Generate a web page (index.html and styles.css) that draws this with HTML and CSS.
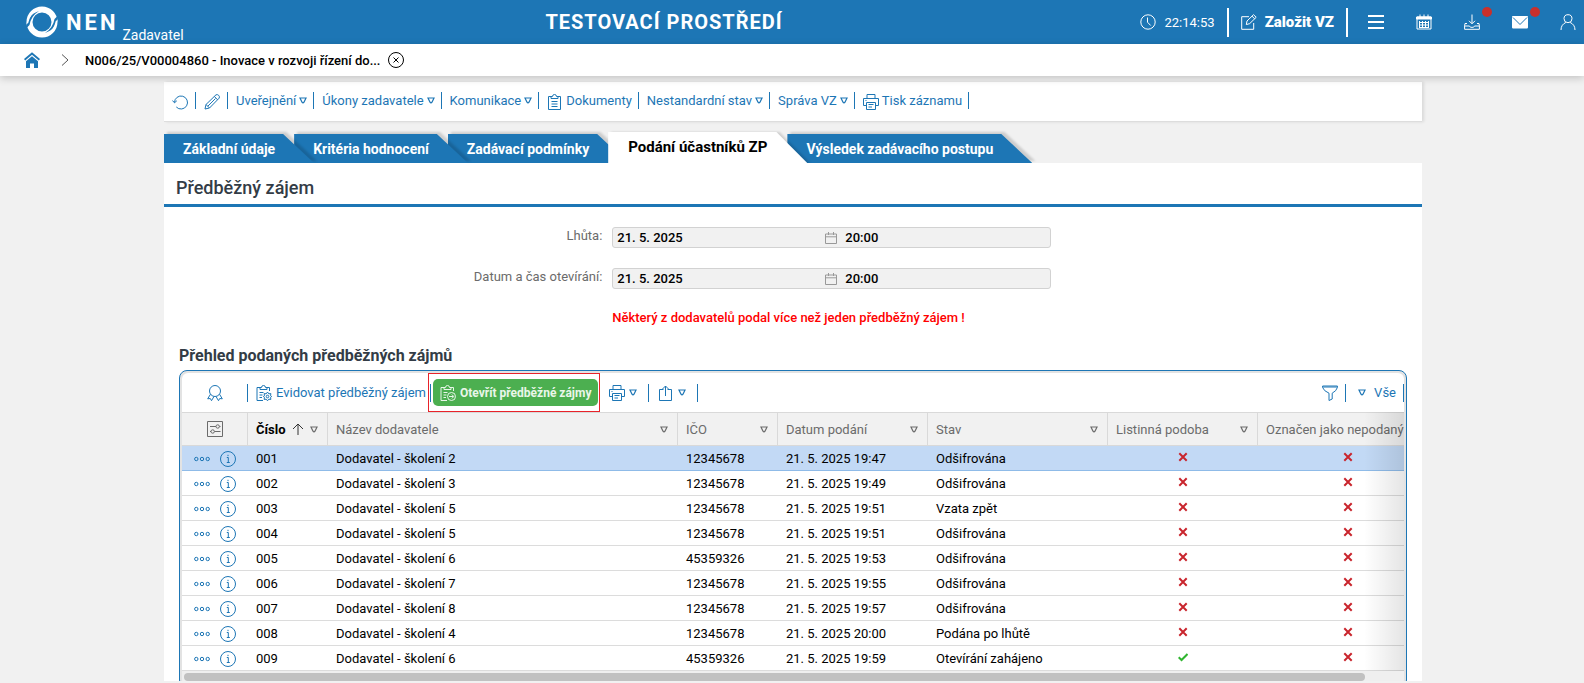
FILE: index.html
```html
<!DOCTYPE html>
<html lang="cs">
<head>
    <meta charset="UTF-8">
    <meta name="viewport" content="width=device-width, initial-scale=1.0">
    <title>NEN - Předběžný zájem</title>
    <link rel="stylesheet" href="styles.css">
</head>
<body>
    <!-- icon sprite -->
    <svg class="sprite" xmlns="http://www.w3.org/2000/svg">
        <symbol id="i-print" viewBox="0 0 16 16"><path d="M4 4.500V.5h8v4M3.500 11.500H.5v-7h15v7h-3M3.500 8.500h9v7h-9zM5.500 10.500h5M5.500 13h3.500M2.500 6.500h1"/></symbol>
        <symbol id="i-info" viewBox="0 0 16 16"><circle cx="8" cy="8" r="7.500"/><path d="M6.800 6.500h1.500v5M6.800 11.500h3M8 3.800v1.300"/></symbol>
        <symbol id="i-dots" viewBox="0 0 16 6"><circle cx="2.300" cy="3" r="1.700"/><circle cx="8" cy="3" r="1.700"/><circle cx="13.700" cy="3" r="1.700"/></symbol>
        <symbol id="i-down" viewBox="0 0 8 7"><path d="M1 1h6L5 5.200Q4 6.600 3 5.200z"/></symbol>
        <symbol id="i-no" viewBox="0 0 10 10"><path d="M1.300 1.300l7.400 7.400M8.700 1.300L1.300 8.700"/></symbol>
        <symbol id="i-yes" viewBox="0 0 10 10"><path d="M.7 5.300L3.500 8l6-6"/></symbol>
        <symbol id="i-cal" viewBox="0 0 12 12"><path d="M.5 2h11v9.500H.5zM.5 4.800h11M3.500 0v3M8.500 0v3"/></symbol>
        <symbol id="i-clip" viewBox="0 0 16 16"><path d="M4 2.500H1.500v13h12v-13H11M4 4.500v-2h1.500a2 2 0 0 1 4 0H11v2zM4.500 7.500h6M4.500 10h6M4.500 12.500h6"/></symbol>
    </svg>

    <header class="topbar">
        <a class="logo" href="#">
            <svg class="logo-ring" viewBox="0 0 32 32">
                <circle cx="16" cy="16" r="12.500" fill="none" stroke="#fff" stroke-width="6"/>
                <path d="M31.500 10Q31 23 19 27Q27 22 28.500 13zM.5 22Q1 9 13 5Q5 10 3.500 19z" fill="#1d76b5"/>
                <path d="M31.600 14Q30.500 24 21 30Q28 23 29.800 15zM.4 18Q1.500 8 11 2Q4 9 2.200 17z" fill="#fff"/>
            </svg>
            <span class="logo-name">NEN</span>
            <span class="logo-role">Zadavatel</span>
        </a>
        <div class="env">TESTOVACÍ PROSTŘEDÍ</div>
        <div class="clock">
            <svg class="ico" viewBox="0 0 16 16"><circle cx="8" cy="8" r="7.200"/><path d="M7.500 3.500v4.700l3.200 3.300"/></svg>
            <span>22:14:53</span>
        </div>
        <button class="create">
            <svg class="ico" viewBox="0 0 16 16"><path d="M8 2.700H.7v12.600h12V9M6 7l6.500-6.300 2.700 2.600L8.700 9.600 5.300 10.600zM11 2.200l2.700 2.600"/></svg>
            <span>Založit VZ</span>
        </button>
        <nav class="top-icons">
            <button aria-label="Menu"><svg class="ico thick" viewBox="0 0 16 16"><path d="M0 2h16M0 8h16M0 14h16"/></svg></button>
            <button aria-label="Kalendář"><svg class="ico" viewBox="0 0 16 16"><path d="M1 3h14v12H1z"/><path d="M.5 3h15v2H.5z" fill="#fff"/><path d="M4 .5V3M8 .5V3M12 .5V3M3 8.500h10M3 11h10M3 13.500h10M3.500 7v7M6.500 7v7M9.500 7v7M12.500 7v7"/></svg></button>
            <button aria-label="Stažení"><svg class="ico" viewBox="0 0 16 16"><path d="M8 .5v9M5 6.800l3 3 3-3M3 9.500H1l-.4 2.300v3.500h14.800v-3.500L15 9.500h-2M.6 12h4.900l1 1.300h3l1-1.300h4.900"/></svg><i class="badge"></i></button>
            <button aria-label="Zprávy"><svg class="ico" viewBox="0 0 16 16"><rect x="0" y="2.500" width="16" height="11.500" rx="1" fill="#fff"/><path d="M1 3.500l7 7 7-7" stroke="#1d76b5"/></svg><i class="badge"></i></button>
            <button aria-label="Uživatel"><svg class="ico" viewBox="0 0 16 16"><circle cx="8" cy="4.700" r="4"/><path d="M1 16c0-4 2-6.200 4.800-7.500M15 16c0-4-2-6.200-4.800-7.500"/></svg></button>
        </nav>
    </header>

    <nav class="crumbs">
        <a href="#" class="home" aria-label="Domů"><svg viewBox="0 0 16 16"><path d="M8 .2L16 7l-1.200 1.400L8 2.700 1.200 8.400 0 7z"/><path d="M8 4.300l6 5V16h-4v-4.500H6V16H2V9.300z"/></svg></a>
        <svg class="chevron" viewBox="0 0 8 12"><path d="M1 .5L7 6l-6 5.500"/></svg>
        <a href="#" class="crumb">N006/25/V00004860 - Inovace v rozvoji řízení do...</a>
        <button class="crumb-close" aria-label="Zavřít"><svg class="ico" viewBox="0 0 16 16"><circle cx="8" cy="8" r="7.500"/><path d="M5.500 5.500l5 5M10.500 5.500l-5 5"/></svg></button>
    </nav>

    <main>
        <div class="actions">
            <button class="icon-only" aria-label="Obnovit"><svg class="ico" viewBox="0 0 16 16"><path d="M2.500 8.500a6.500 6.500 0 1 1 1.800 4.500M.4 6.500l2.100 2.300 2.300-2"/></svg></button>
            <button class="icon-only" aria-label="Upravit"><svg class="ico" viewBox="0 0 16 16"><path d="M1 15l1-4.500L12 .8q1.500-.6 2.700.6t.5 2.700L5.500 14zM2 10.500L5.500 14M10.300 2.400l3.400 3.500M3.800 12.200l7.700-7.700"/></svg></button>
            <button>Uveřejnění <svg class="down"><use href="#i-down"/></svg></button>
            <button>Úkony zadavatele <svg class="down"><use href="#i-down"/></svg></button>
            <button>Komunikace <svg class="down"><use href="#i-down"/></svg></button>
            <button><svg class="ico"><use href="#i-clip"/></svg>Dokumenty</button>
            <button>Nestandardní stav <svg class="down"><use href="#i-down"/></svg></button>
            <button>Správa VZ <svg class="down"><use href="#i-down"/></svg></button>
            <button><svg class="ico"><use href="#i-print"/></svg>Tisk záznamu</button>
        </div>

        <nav class="tabs">
            <a href="#" class="tab"><i class="tab-bg"></i><span>Základní údaje</span></a>
            <a href="#" class="tab"><i class="tab-bg"></i><span>Kritéria hodnocení</span></a>
            <a href="#" class="tab"><i class="tab-bg"></i><span>Zadávací podmínky</span></a>
            <a href="#" class="tab active"><i class="tab-bg"></i><span>Podání účastníků ZP</span></a>
            <a href="#" class="tab"><i class="tab-bg"></i><span>Výsledek zadávacího postupu</span></a>
        </nav>

        <section class="panel">
            <h1>Předběžný zájem</h1>

            <div class="form">
                <label for="deadline">Lhůta:</label>
                <div class="datetime">
                    <input id="deadline" class="date" value="21. 5. 2025" readonly>
                    <svg><use href="#i-cal"/></svg>
                    <input class="time" value="20:00" aria-label="Lhůta - čas" readonly>
                </div>
                <label for="opening">Datum a čas otevírání:</label>
                <div class="datetime">
                    <input id="opening" class="date" value="21. 5. 2025" readonly>
                    <svg><use href="#i-cal"/></svg>
                    <input class="time" value="20:00" aria-label="Otevírání - čas" readonly>
                </div>
                <p class="warning">Některý z dodavatelů podal více než jeden předběžný zájem !</p>
            </div>

            <h2>Přehled podaných předběžných zájmů</h2>
            <div class="grid">
                <div class="grid-bar">
                    <button class="badge-btn" aria-label="Certifikát"><svg class="ico" viewBox="0 0 16 16"><circle cx="8" cy="6" r="5.500"/><path d="M3.500 9.200L.7 13.800l2.600-.3 1.200 2.200L7 11.500M12.500 9.200l2.800 4.600-2.600-.3-1.200 2.200L9 11.500"/></svg></button>
                    <button class="register"><svg class="ico" viewBox="0 0 16 16"><path d="M4 2.500H1v13h6M4 4.500v-2h1.500a2 2 0 0 1 4 0H11v2zM11 2.500h2.500V6M3.500 7.500h4M3.500 10h3M3.500 12.500h2.500"/><circle cx="11.500" cy="11.500" r="1.300"/><path d="M11.500 7l1.200 1.800 2.200-.2-.4 2.100 1.200.8-1.200.9.4 2-2.200-.2-1.200 1.600-1.200-1.600-2.200.2.400-2-1.200-.9 1.200-.8-.4-2.100 2.200.2z"/></svg>Evidovat předběžný zájem</button>
                    <div class="highlight">
                        <button class="open"><svg class="ico" viewBox="0 0 16 16"><path d="M4 2.500H1v13h6M4 4.500v-2h1.500a2 2 0 0 1 4 0H11v2zM11 2.500h2.500V6M3.500 7.500h4M3.500 10h3M3.500 12.500h2.500"/><circle cx="11.500" cy="11.500" r="4"/><path d="M9 11.500h4.500M11.800 9.500l2 2-2 2"/></svg>Otevřít předběžné zájmy</button>
                    </div>
                    <button class="print" aria-label="Tisk"><svg class="ico"><use href="#i-print"/></svg><svg class="down"><use href="#i-down"/></svg></button>
                    <button class="export" aria-label="Export"><svg class="ico" viewBox="0 0 16 16"><path d="M5.500 4.500h-4v11h12v-11h-4M7.500 11V1M4.500 4l3-3 3 3"/></svg><svg class="down"><use href="#i-down"/></svg></button>
                    <button class="filter" aria-label="Filtr"><svg class="ico" viewBox="0 0 16 16"><path d="M.6 1h14.800v1.500q-1 3.500-5.200 5.700V14l-3.200 1.500V8.200Q1.800 6 .6 2.500zM.6 2h14.800"/></svg></button>
                    <button class="all"><svg class="down"><use href="#i-down"/></svg>Vše</button>
                </div>

                <div class="grid-scroll">
                    <table>
                        <colgroup><col class="c-tools"><col class="c-num"><col class="c-name"><col class="c-ico"><col class="c-date"><col class="c-state"><col class="c-paper"><col class="c-mark"></colgroup>
                        <thead>
                            <tr>
                                <th class="tools"><button aria-label="Nastavení sloupců"><svg class="ico" viewBox="0 0 16 16"><path d="M.5.5h15v15H.5zM3 5.500h6M12.500 5.500h1M3 10.500h1M7.500 10.500h6"/><circle cx="10.700" cy="5.500" r="1.700"/><circle cx="5.700" cy="10.500" r="1.700"/></svg></button></th>
                                <th class="sorted"><div>Číslo<svg class="sort" viewBox="0 0 12 12"><path d="M6 12V1M1 6l5-5 5 5"/></svg><svg class="down"><use href="#i-down"/></svg></div></th>
                                <th><div>Název dodavatele<svg class="down"><use href="#i-down"/></svg></div></th>
                                <th><div>IČO<svg class="down"><use href="#i-down"/></svg></div></th>
                                <th><div>Datum podání<svg class="down"><use href="#i-down"/></svg></div></th>
                                <th><div>Stav<svg class="down"><use href="#i-down"/></svg></div></th>
                                <th><div>Listinná podoba<svg class="down"><use href="#i-down"/></svg></div></th>
                                <th><div>Označen jako nepodaný<svg class="down"><use href="#i-down"/></svg></div></th>
                            </tr>
                        </thead>
                        <tbody>
                            <tr class="selected">
                                <td class="tools"><button aria-label="Možnosti"><svg class="dots"><use href="#i-dots"/></svg></button><button aria-label="Detail"><svg class="ico"><use href="#i-info"/></svg></button></td>
                                <td>001</td><td>Dodavatel - školení 2</td><td>12345678</td><td>21. 5. 2025 19:47</td><td>Odšifrována</td>
                                <td class="flag"><svg class="no"><use href="#i-no"/></svg></td><td class="flag"><svg class="no"><use href="#i-no"/></svg></td>
                            </tr>
                            <tr>
                                <td class="tools"><button aria-label="Možnosti"><svg class="dots"><use href="#i-dots"/></svg></button><button aria-label="Detail"><svg class="ico"><use href="#i-info"/></svg></button></td>
                                <td>002</td><td>Dodavatel - školení 3</td><td>12345678</td><td>21. 5. 2025 19:49</td><td>Odšifrována</td>
                                <td class="flag"><svg class="no"><use href="#i-no"/></svg></td><td class="flag"><svg class="no"><use href="#i-no"/></svg></td>
                            </tr>
                            <tr>
                                <td class="tools"><button aria-label="Možnosti"><svg class="dots"><use href="#i-dots"/></svg></button><button aria-label="Detail"><svg class="ico"><use href="#i-info"/></svg></button></td>
                                <td>003</td><td>Dodavatel - školení 5</td><td>12345678</td><td>21. 5. 2025 19:51</td><td>Vzata zpět</td>
                                <td class="flag"><svg class="no"><use href="#i-no"/></svg></td><td class="flag"><svg class="no"><use href="#i-no"/></svg></td>
                            </tr>
                            <tr>
                                <td class="tools"><button aria-label="Možnosti"><svg class="dots"><use href="#i-dots"/></svg></button><button aria-label="Detail"><svg class="ico"><use href="#i-info"/></svg></button></td>
                                <td>004</td><td>Dodavatel - školení 5</td><td>12345678</td><td>21. 5. 2025 19:51</td><td>Odšifrována</td>
                                <td class="flag"><svg class="no"><use href="#i-no"/></svg></td><td class="flag"><svg class="no"><use href="#i-no"/></svg></td>
                            </tr>
                            <tr>
                                <td class="tools"><button aria-label="Možnosti"><svg class="dots"><use href="#i-dots"/></svg></button><button aria-label="Detail"><svg class="ico"><use href="#i-info"/></svg></button></td>
                                <td>005</td><td>Dodavatel - školení 6</td><td>45359326</td><td>21. 5. 2025 19:53</td><td>Odšifrována</td>
                                <td class="flag"><svg class="no"><use href="#i-no"/></svg></td><td class="flag"><svg class="no"><use href="#i-no"/></svg></td>
                            </tr>
                            <tr>
                                <td class="tools"><button aria-label="Možnosti"><svg class="dots"><use href="#i-dots"/></svg></button><button aria-label="Detail"><svg class="ico"><use href="#i-info"/></svg></button></td>
                                <td>006</td><td>Dodavatel - školení 7</td><td>12345678</td><td>21. 5. 2025 19:55</td><td>Odšifrována</td>
                                <td class="flag"><svg class="no"><use href="#i-no"/></svg></td><td class="flag"><svg class="no"><use href="#i-no"/></svg></td>
                            </tr>
                            <tr>
                                <td class="tools"><button aria-label="Možnosti"><svg class="dots"><use href="#i-dots"/></svg></button><button aria-label="Detail"><svg class="ico"><use href="#i-info"/></svg></button></td>
                                <td>007</td><td>Dodavatel - školení 8</td><td>12345678</td><td>21. 5. 2025 19:57</td><td>Odšifrována</td>
                                <td class="flag"><svg class="no"><use href="#i-no"/></svg></td><td class="flag"><svg class="no"><use href="#i-no"/></svg></td>
                            </tr>
                            <tr>
                                <td class="tools"><button aria-label="Možnosti"><svg class="dots"><use href="#i-dots"/></svg></button><button aria-label="Detail"><svg class="ico"><use href="#i-info"/></svg></button></td>
                                <td>008</td><td>Dodavatel - školení 4</td><td>12345678</td><td>21. 5. 2025 20:00</td><td>Podána po lhůtě</td>
                                <td class="flag"><svg class="no"><use href="#i-no"/></svg></td><td class="flag"><svg class="no"><use href="#i-no"/></svg></td>
                            </tr>
                            <tr>
                                <td class="tools"><button aria-label="Možnosti"><svg class="dots"><use href="#i-dots"/></svg></button><button aria-label="Detail"><svg class="ico"><use href="#i-info"/></svg></button></td>
                                <td>009</td><td>Dodavatel - školení 6</td><td>45359326</td><td>21. 5. 2025 19:59</td><td>Otevírání zahájeno</td>
                                <td class="flag"><svg class="yes"><use href="#i-yes"/></svg></td><td class="flag"><svg class="no"><use href="#i-no"/></svg></td>
                            </tr>
                        </tbody>
                    </table>
                </div>
                <div class="scrollbar"><div class="thumb"></div></div>
            </div>
        </section>
    </main>
</body>
</html>
```
FILE: styles.css
```css
* {
    box-sizing: border-box;
}
body {
    margin: 0;
    height: 100vh;
    overflow: hidden;
    display: flex;
    flex-direction: column;
    background: #f1f1f1;
    font-family: Roboto, "Liberation Sans", sans-serif;
    font-size: 13px;
    color: #000;
}
a {
    color: inherit;
    text-decoration: none;
}
button {
    display: flex;
    align-items: center;
    border: 0;
    padding: 0;
    background: none;
    font: inherit;
    color: inherit;
    white-space: nowrap;
    cursor: pointer;
}
svg {
    flex: none;
    display: block;
}
.sprite {
    position: absolute;
    width: 0;
    height: 0;
}
.ico {
    width: 16px;
    height: 16px;
    fill: none;
    stroke: currentColor;
    stroke-width: 1;
}
.thick {
    stroke-width: 2;
}
.down {
    width: 8px;
    height: 7px;
    fill: none;
    stroke: currentColor;
    stroke-width: 1.2;
}

/* header */
.topbar {
    flex: none;
    height: 44px;
    display: flex;
    align-items: center;
    padding: 0 8px 0 26px;
    background: #1d76b5;
    color: #fff;
}
.logo {
    display: flex;
    align-items: center;
    height: 100%;
}
.logo-ring {
    width: 32px;
    height: 32px;
}
.logo-name {
    margin-left: 8px;
    font-size: 22px;
    font-weight: 700;
    letter-spacing: 3px;
}
.logo-role {
    align-self: flex-end;
    margin-left: 4px;
    font-size: 14px;
    line-height: 18px;
}
.env {
    flex: 1;
    padding-left: 4px;
    text-align: center;
    font-size: 20px;
    font-weight: 700;
    letter-spacing: 1px;
}
.clock, .create {
    display: flex;
    align-items: center;
    gap: 8px;
    height: 29px;
    border-right: 2px solid #fff;
    padding-right: 12px;
}
.create {
    padding-left: 12px;
    font-size: 15px;
    font-weight: 900;
}
.top-icons {
    display: flex;
    gap: 32px;
    padding-left: 20px;
}
.top-icons button {
    position: relative;
}
.badge {
    position: absolute;
    top: -7px;
    right: -12px;
    width: 10px;
    height: 10px;
    border-radius: 50%;
    background: #c9302c;
}

/* breadcrumbs */
.crumbs {
    flex: none;
    position: relative;
    height: 32px;
    display: flex;
    align-items: center;
    padding-left: 24px;
    background: #fff;
    box-shadow: 0 2px 8px rgba(0, 0, 0, 0.2);
}
.home svg {
    width: 16px;
    height: 16px;
    fill: #1d76b5;
}
.chevron {
    width: 8px;
    height: 12px;
    margin: 0 16px 0 21px;
    fill: none;
    stroke: #555;
}
.crumb {
    font-weight: 500;
}
.crumb-close {
    margin-left: 8px;
}

main {
    flex: 1;
    min-height: 0;
    display: flex;
    flex-direction: column;
    padding: 6px 162px 2px 164px;
}

/* record actions */
.actions {
    flex: none;
    display: flex;
    align-items: center;
    height: 40px;
    padding-bottom: 2px;
    background: #fff;
    border-bottom: 1px solid #ddd;
    box-shadow: 2px 0 3px rgba(0, 0, 0, 0.1);
    color: #1d76b5;
}
.actions button {
    height: 17px;
    gap: 3px;
    padding: 0 6px 0 8px;
    border-right: 1px solid #1d76b5;
}
.actions .icon-only {
    padding-right: 7px;
}
.actions .ico {
    margin-top: 2px;
}

/* tabs */
.tabs {
    flex: none;
    display: flex;
    align-items: flex-end;
    height: 41px;
}
.tab {
    position: relative;
    height: 29px;
    padding: 0 19px;
    line-height: 30px;
    color: #fff;
    font-size: 14px;
    font-weight: 700;
}
.tab span {
    position: relative;
}
.tab-bg {
    position: absolute;
    top: 0;
    left: 0;
    bottom: 0;
    right: -20px;
    filter: drop-shadow(3px -2px 1px rgba(0, 0, 0, 0.15));
}
.tab-bg::before {
    content: "";
    display: block;
    height: 100%;
    background: #1d76b5;
    clip-path: polygon(0 0, calc(100% - 31px) 0, 100% 100%, 0 100%);
}
.tab:nth-child(1) { z-index: 4; }
.tab:nth-child(2) { z-index: 3; }
.tab:nth-child(3) { z-index: 2; }
.tab.active {
    z-index: 5;
    height: 31px;
    padding: 0 20px;
    color: #000;
    font-size: 15px;
}
.tab.active .tab-bg::before {
    background: #fff;
}
.tab.active .tab-bg {
    filter: drop-shadow(3px 0 1px rgba(0, 0, 0, 0.15));
}

/* panel */
.panel {
    flex: 1;
    min-height: 0;
    position: relative;
    z-index: 6;
    overflow: hidden;
    background: #fff;
}
h1 {
    margin: 0;
    height: 44px;
    padding-left: 12px;
    border-bottom: 3px solid #1d76b5;
    font-size: 18px;
    font-weight: 500;
    line-height: 50px;
    color: #333c46;
}
.form {
    display: grid;
    grid-template-columns: 35% 35%;
    gap: 20px 8px;
    padding-top: 20px;
}
.form label {
    padding-right: 2px;
    line-height: 18px;
    text-align: right;
    color: #6b6b6b;
}
.datetime {
    display: flex;
    align-items: center;
    height: 21px;
    margin-right: 2px;
    border: 1px solid #d2d2d2;
    border-radius: 3px;
    background: #f1f1f1;
}
.datetime input {
    min-width: 0;
    padding: 0 0 0 4px;
    border: 0;
    background: none;
    font: inherit;
    font-weight: 500;
}
.date {
    width: 212px;
}
.time {
    flex: 1;
    margin-left: 4px;
}
.datetime svg {
    width: 12px;
    height: 12px;
    fill: none;
    stroke: #999;
}
.warning {
    grid-column: 2;
    margin: 0;
    line-height: 18px;
    font-weight: 500;
    color: #f00;
}
h2 {
    margin: 20px 0 5px 15px;
    font-size: 16px;
    font-weight: 700;
    line-height: 18px;
    color: #333c46;
}

/* grid */
.grid {
    position: relative;
    margin: 0 15px;
    padding: 2px;
    border: 1px solid #1d76b5;
    border-radius: 8px;
    background: #e3e3e3;
}
.grid-bar {
    position: relative;
    z-index: 1;
    display: flex;
    align-items: center;
    height: 39px;
    border-radius: 6px 6px 0 0;
    background: #fff;
    color: #1d76b5;
}
.grid-bar button {
    height: 18px;
    gap: 4px;
}
.grid-bar .badge-btn {
    width: 66px;
    justify-content: center;
    border-right: 1px solid #1d76b5;
}
.grid-bar .register {
    padding: 0 4px 0 8px;
    border-right: 1px solid #1d76b5;
}
/* framed primary action */
.highlight {
    display: flex;
    align-items: center;
    align-self: stretch;
    margin-left: -3px;
    padding: 0 1px 0 4px;
    border: 1px solid #e8232a;
}
.highlight .open {
    height: 27px;
    padding: 0 7px;
    border-radius: 5px;
    background: #4caf50;
    color: #e9f6e9;
    font-size: 12px;
    font-weight: 700;
}
.grid-bar .print, .grid-bar .export {
    padding: 0 11px 0 9px;
    border-right: 1px solid #1d76b5;
}
.grid-bar .filter {
    margin-left: auto;
    padding-right: 7px;
    border-right: 1px solid #1d76b5;
}
.grid-bar .all {
    gap: 8px;
    padding: 0 7px 0 12px;
    border-right: 1px solid #1d76b5;
}
.grid-scroll {
    position: relative;
    overflow: hidden;
    background: #fff;
}
.grid-scroll::after {
    content: "";
    position: absolute;
    top: 0;
    right: 0;
    bottom: 0;
    width: 40px;
    background: linear-gradient(to right, rgba(0, 0, 0, 0), rgba(0, 0, 0, 0.1));
}
table {
    width: 1256px;
    table-layout: fixed;
    border-collapse: separate;
    border-spacing: 0;
}
.c-tools { width: 66px; }
.c-num { width: 80px; }
.c-name { width: 350px; }
.c-ico { width: 100px; }
.c-date { width: 150px; }
.c-state { width: 180px; }
.c-paper { width: 150px; }
.c-mark { width: 180px; }
th {
    height: 34px;
    padding: 0 9px 0 8px;
    border: solid #d9d9d9;
    border-width: 1px 1px 1px 0;
    background: #f1f1f1;
    color: #6b6b6b;
    font-weight: 400;
    text-align: left;
    white-space: nowrap;
}
th div {
    display: flex;
    align-items: center;
}
th .down {
    margin-left: auto;
}
.sorted {
    color: #000;
    font-weight: 700;
}
.sorted .down {
    color: #6b6b6b;
}
.sort {
    width: 12px;
    height: 12px;
    margin-left: 6px;
    fill: none;
    stroke: #333;
}
td {
    height: 25px;
    padding: 2px 8px 0;
    border-bottom: 1px solid #dcdcdc;
    line-height: 18px;
}
.selected td {
    background: #c2d9f5;
    border-bottom-color: #8fbbe8;
}
td.tools {
    padding: 0;
    color: #1d76b5;
}
.tools button {
    display: inline-flex;
    vertical-align: middle;
}
th.tools {
    padding: 0;
    text-align: center;
}
td.tools button:first-child {
    margin: 0 10px 0 12px;
}
.dots {
    width: 16px;
    height: 6px;
    fill: none;
    stroke: currentColor;
}
.flag svg {
    width: 10px;
    height: 10px;
    margin: -4px auto 0;
    fill: none;
    stroke: #c9252d;
    stroke-width: 2;
}
.flag svg.yes {
    stroke: #2fb52f;
}
.scrollbar {
    padding: 2px 2px 4px;
    border-radius: 0 0 6px 6px;
    background: #efefef;
}
.thumb {
    width: 97%;
    height: 8px;
    border-radius: 4px;
    background: #c1c1c1;
}
```
